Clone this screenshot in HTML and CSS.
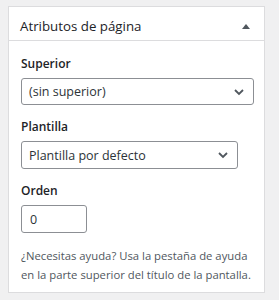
FILE: index.html
```html
<!DOCTYPE html>
<html lang="es">
<head>
    <meta charset="UTF-8">
    <title>Atributos de página</title>
    <link rel="stylesheet" href="styles.css">
</head>
<body>
    <div class="postbox">
        <div class="postbox-header">
            <h2 class="postbox-title">Atributos de página</h2>
            <span class="toggle-indicator"></span>
        </div>
        <div class="inside">
            <p class="attr-label">Superior</p>
            <div class="select-box select-wide">
                <span>(sin superior)</span>
                <svg viewBox="0 0 16 16" width="16" height="16"><path d="M4 6l4 4 4-4" fill="none" stroke="#50575e" stroke-width="1.8"/></svg>
            </div>

            <p class="attr-label">Plantilla</p>
            <div class="select-box select-mid">
                <span>Plantilla por defecto</span>
                <svg viewBox="0 0 16 16" width="16" height="16"><path d="M4 6l4 4 4-4" fill="none" stroke="#50575e" stroke-width="1.8"/></svg>
            </div>

            <p class="attr-label">Orden</p>
            <input type="text" class="order-input" value="0">

            <p class="help-text">¿Necesitas ayuda? Usa la pestaña de ayuda en la parte superior del título de la pantalla.</p>
        </div>
    </div>
</body>
</html>
```

FILE: styles.css
```css
* {
    margin: 0;
    padding: 0;
    box-sizing: border-box;
    font-family: "Open Sans", "Noto Sans", sans-serif;
}

body {
    background-color: #f0f0f1;
    padding: 6px 0 0 8px;
}

.postbox {
    width: 257px;
    height: 287px;
    background: #fff;
    border: 1px solid #dcdcde;
}

.postbox-header {
    display: flex;
    align-items: center;
    justify-content: space-between;
    height: 34px;
    border-bottom: 1px solid #dcdcde;
    padding: 5px 14px 0 11px;
}

.postbox-title {
    font-size: 13.3px;
    font-weight: 400;
    color: #1d2327;
}

.toggle-indicator {
    width: 0;
    height: 0;
    border-left: 4px solid transparent;
    border-right: 4px solid transparent;
    border-bottom: 5px solid #50575e;
}

.inside {
    padding: 14px 12px 0 12px;
}

.attr-label {
    font-size: 12px;
    font-weight: 600;
    color: #1d2327;
    line-height: 18px;
    margin-bottom: 5px;
}

.select-box {
    display: flex;
    align-items: center;
    justify-content: space-between;
    height: 27px;
    border: 1px solid #8c8f94;
    border-radius: 3px;
    padding: 0 6px 0 7px;
    font-size: 12.5px;
    color: #2c3338;
    margin-bottom: 13px;
}

.select-wide {
    width: 233px;
}

.select-mid {
    width: 217px;
    height: 28px;
}

.order-input {
    display: block;
    width: 66px;
    height: 28px;
    border: 1px solid #8c8f94;
    border-radius: 3px;
    padding: 0 8px;
    font-size: 12.5px;
    color: #2c3338;
    margin-bottom: 13px;
}

.help-text {
    font-size: 11.3px;
    line-height: 19px;
    color: #50575e;
}
```
